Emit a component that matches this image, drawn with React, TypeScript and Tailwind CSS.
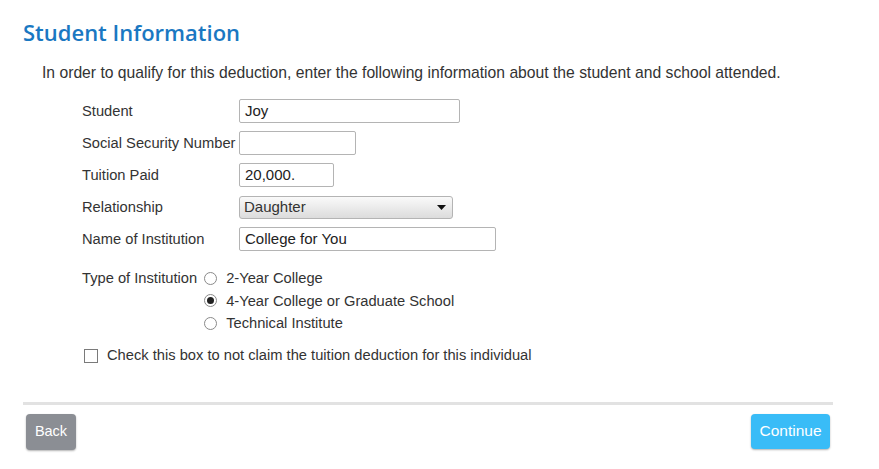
import React from "react";

function Radio({ checked, label }: { checked?: boolean; label: string }) {
  return (
    <div className="flex items-center h-[22.5px]">
      <span className="w-[13px] h-[13px] rounded-full border border-[#8a8a8a] bg-white flex items-center justify-center mr-[9px]">
        {checked && <span className="w-[7px] h-[7px] rounded-full bg-[#222]" />}
      </span>
      <span>{label}</span>
    </div>
  );
}

export default function App() {
  const font = { fontFamily: '"Liberation Sans", Arial, sans-serif' };
  return (
    <div className="w-[879px] h-[469px] bg-white text-[#333] text-[14.7px]" style={font}>
      <div className="pl-[23px] pt-[17px] w-[833px]">
        <h1
          className="text-[#1a78c2] text-[22px] font-semibold leading-[30px]"
          style={{ fontFamily: '"Open Sans", "Noto Sans", sans-serif' }}
        >
          Student Information
        </h1>
        <p className="pl-[19px] mt-[17px] text-[15.7px] leading-[18px] text-[#333]">
          In order to qualify for this deduction, enter the following information about the student and school attended.
        </p>
        <div className="pl-[59px] mt-[17px] flex flex-col gap-[8px]">
          <div className="flex items-center h-[24px]">
            <span className="w-[157px]">Student</span>
            <div className="w-[221px] h-[24px] border border-[#b4b4b4] rounded-[2px] px-[5px] flex items-center text-[15px] text-[#222]">Joy</div>
          </div>
          <div className="flex items-center h-[24px]">
            <span className="w-[157px] whitespace-nowrap">Social Security Number</span>
            <div className="w-[117px] h-[24px] border border-[#b4b4b4] rounded-[2px]" />
          </div>
          <div className="flex items-center h-[24px]">
            <span className="w-[157px]">Tuition Paid</span>
            <div className="w-[95px] h-[24px] border border-[#b4b4b4] rounded-[2px] px-[5px] flex items-center text-[15px] text-[#222]">20,000.</div>
          </div>
          <div className="flex items-center h-[24px]">
            <span className="w-[157px]">Relationship</span>
            <div className="w-[214px] h-[23px] border border-[#b4b4b4] rounded-[3px] pl-[4px] pr-[6px] flex items-center justify-between bg-gradient-to-b from-[#fafafa] to-[#dcdcdc] text-[15px]">
              <span>Daughter</span>
              <svg width="9" height="5" viewBox="0 0 9 5"><path d="M0 0 H9 L4.5 5 Z" fill="#111" /></svg>
            </div>
          </div>
          <div className="flex items-center h-[24px]">
            <span className="w-[157px]">Name of Institution</span>
            <div className="w-[257px] h-[24px] border border-[#b4b4b4] rounded-[2px] px-[5px] flex items-center text-[15px] text-[#222]">College for You</div>
          </div>
        </div>
        <div className="pl-[59px] mt-[16px] flex">
          <span className="leading-[22.5px] mr-[7px]">Type of Institution</span>
          <div className="flex flex-col">
            <Radio label="2-Year College" />
            <Radio checked label="4-Year College or Graduate School" />
            <Radio label="Technical Institute" />
          </div>
        </div>
        <div className="pl-[61px] mt-[11px] flex items-center h-[20px]">
          <span className="w-[14px] h-[14px] border border-[#7a7a7a] bg-white mr-[9px]" />
          <span>Check this box to not claim the tuition deduction for this individual</span>
        </div>
        <div className="mt-[36px] h-[3px] bg-[#e2e2e2] w-[810px]" />
        <div className="flex justify-between w-[810px] mt-[9px]">
          <button className="ml-[3px] w-[50px] h-[36px] rounded-[4px] bg-[#8b8e94] text-white text-[14.5px] shadow-[0_1px_2px_rgba(0,0,0,0.3)]">
            Back
          </button>
          <button className="mr-[3px] w-[79px] h-[35px] rounded-[4px] bg-[#39bcf7] text-white text-[15.5px] shadow-[0_1px_2px_rgba(0,0,0,0.3)]">
            Continue
          </button>
        </div>
      </div>
    </div>
  );
}
